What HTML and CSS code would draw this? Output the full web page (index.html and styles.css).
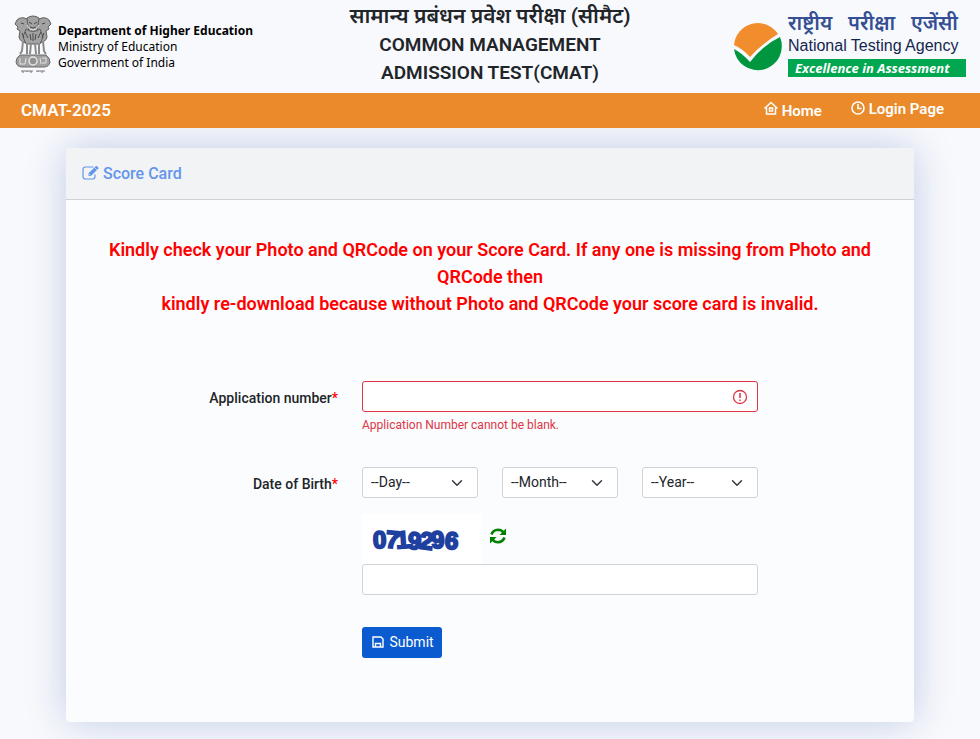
FILE: index.html
```html
<!DOCTYPE html>
<html lang="en">

<head>
    <meta charset="UTF-8" />
    <meta name="viewport" content="width=device-width, initial-scale=1.0" />
    <title>CMAT-2025 Score Card</title>
    <link rel="stylesheet" href="styles.css">
</head>

<body>
    <header class="site-header">
        <div class="ministry">
            <!-- National emblem -->
            <svg class="emblem" viewBox="0 0 38 60" aria-hidden="true">
                <g fill="#a2a2a2" stroke="#5e5e5e" stroke-width="1">
                    <path d="M13 3Q19-1 25 3l1 8q-1 6-7 7-6-1-7-7z" />
                    <path d="M13 4Q7 1 3 5L1 9l3 3-1 2 3 2-1 6q1 5 8 6l2-12z" />
                    <path d="M25 4q6-3 10 1l2 4-3 3 1 2-3 2 1 6q-1 5-8 6l-2-12z" />
                    <path d="M12 14q7 5 14 0l3 8-3 7H12l-3-7z" />
                </g>
                <g stroke="#8a8a8a" stroke-width="2" fill="none">
                    <path d="M9 26L8 36l-2 3M13 28v11M17 28l-1 11M21 28l1 11M25 28v11M29 26l1 10 2 3" />
                </g>
                <path d="M15 7l3 2M23 7l-3 2M16 12q3 2 6 0M7 8l3 1M31 8l-3 1M11 17l3 6M27 17l-3 6M19 18v8M8 18l2 5M30 18l-2 5M16 19l1 6M22 19l-1 6" stroke="#484848" fill="none" />
                <path d="M13 10q2 5 6 5t6-5" stroke="#e4e4e4" fill="none" />
                <path d="M6 40h26q4 3 4 7-1 5-6 5H8q-5 0-6-5 0-4 4-7z" fill="#a0a0a0" stroke="#6c6c6c" />
                <path d="M6 43v6h5M28 43h4v5h-4M12 43l-1 6M26 43l1 6" stroke="#e4e4e4" stroke-width="1" fill="none" />
                <circle cx="19" cy="46" r="4" fill="#929292" stroke="#e4e4e4" stroke-width="1.5" />
                <path d="M7 56h12M22 56h9M9 56v2M13 56v1M17 56v2M24 56v1M28 56v2" stroke="#777" fill="none" />
            </svg>
            <p class="ministry-name">
                <strong>Department of Higher Education</strong><br>
                Ministry of Education<br>
                Government of India
            </p>
        </div>
        <h1 class="exam-title">
            <span lang="hi">सामान्य प्रबंधन प्रवेश परीक्षा (सीमैट)</span><br>
            COMMON MANAGEMENT<br>
            ADMISSION TEST(CMAT)
        </h1>
        <div class="agency">
            <svg class="agency-mark" viewBox="0 0 48 48" aria-hidden="true">
                <path d="M0 22A24 24 0 0 1 44 11Q29 20 16 34 9 26 0 22z" fill="#f28d2d" />
                <path d="M0 26q8 4 16 13Q29 22 46 14A24 24 0 1 1 0 26z" fill="#009640" />
            </svg>
            <div class="agency-text">
                <span class="agency-hindi" lang="hi">
                    <span>राष्ट्रीय</span>
                    <span>परीक्षा</span>
                    <span>एजेंसी</span>
                </span>
                <span class="agency-name">National Testing Agency</span>
                <span class="agency-motto">Excellence in Assessment</span>
            </div>
        </div>
    </header>

    <nav class="navbar">
        <a class="brand" href="#">CMAT-2025</a>
        <div class="nav-links">
            <a class="nav-link nav-home" href="#">
                <svg class="nav-icon" viewBox="0 0 14 14" fill="none" stroke="currentColor" stroke-width="1.5" aria-hidden="true">
                    <path d="M.5 7.5L7 1.500l6.500 6M2.500 6.500v6.500h9V6.500M5.500 7h3v3h-3z" />
                </svg>
                Home
            </a>
            <a class="nav-link" href="#">
                <svg class="nav-icon" viewBox="0 0 14 14" fill="none" stroke="currentColor" stroke-width="1.6" aria-hidden="true">
                    <circle cx="7" cy="7" r="6" />
                    <path d="M7 3v4.500h3.500" />
                </svg>
                Login Page
            </a>
        </div>
    </nav>

    <main class="content">
        <div class="card">
            <h2 class="card-header">
                <svg class="edit-icon" viewBox="0 0 17 16" aria-hidden="true">
                    <path d="M11.500 2H3.500Q1 2 1 4.500v7Q1 14 3.500 14h7q2.500 0 2.500-2.500V9.500" fill="none" stroke="currentColor" stroke-width="1.200" />
                    <path d="M6.500 11V8.300L13.700 1.200q.7-.6 1.400 0l1.100 1.200q.6.700 0 1.300L9 11z" fill="currentColor" />
                    <path d="M12.500 2.500l2.500 2.500M7 9l1.500 1.500" stroke="#f2f3f5" stroke-width=".7" />
                </svg>
                Score Card
            </h2>
            <div class="card-body">
                <p class="notice">
                    Kindly check your Photo and QRCode on your Score Card. If any one is missing from Photo and QRCode then<br>
                    kindly re-download because without Photo and QRCode your score card is invalid.
                </p>
                <form class="score-form">
                    <div class="form-row row-application">
                        <label class="form-label" for="application">Application number<span class="required">*</span></label>
                        <div class="field">
                            <div class="input-wrap">
                                <input class="form-control is-invalid" type="text" id="application" aria-describedby="application-error">
                                <svg class="invalid-icon" viewBox="0 0 16 16" fill="none" stroke="currentColor" aria-hidden="true">
                                    <circle cx="8" cy="8" r="6.500" stroke-width="1.300" />
                                    <path d="M8 4v5M8 10.500v1.500" stroke-width="1.500" />
                                </svg>
                            </div>
                            <div class="error" id="application-error">Application Number cannot be blank.</div>
                        </div>
                    </div>
                    <div class="form-row row-birth">
                        <label class="form-label" for="day">Date of Birth<span class="required">*</span></label>
                        <div class="field date-selects">
                            <select class="form-control form-select" id="day">
                                <option>--Day--</option>
                            </select>
                            <select class="form-control form-select" aria-label="Month">
                                <option>--Month--</option>
                            </select>
                            <select class="form-control form-select" aria-label="Year">
                                <option>--Year--</option>
                            </select>
                        </div>
                    </div>
                    <div class="form-row row-captcha">
                        <div class="field field-offset">
                            <div class="captcha">
                                <div class="captcha-image">
                                    <svg viewBox="0 0 120 50" role="img" aria-label="Captcha">
                                        <g class="captcha-digits">
                                            <text x="11" y="34" transform="rotate(-2 17 26)">0</text>
                                            <text x="24" y="34" transform="rotate(5 31 26)">7</text>
                                            <text x="34" y="34" transform="rotate(-4 41 26)">1</text>
                                            <text x="46" y="35" transform="rotate(5 52 26)">9</text>
                                            <text x="58" y="35" transform="rotate(7 63 26)">2</text>
                                            <text x="69" y="34" transform="rotate(-5 75 26)">9</text>
                                            <text x="83" y="35" transform="rotate(4 90 26)">6</text>
                                        </g>
                                    </svg>
                                </div>
                                <button class="refresh" type="button" aria-label="Refresh captcha">
                                    <svg viewBox="0 0 16 16" fill="none" stroke="currentColor" stroke-width="2.600" aria-hidden="true">
                                        <path d="M1.500 6.500Q3 2 8 1.800q3.500 0 5.500 2.700M14.500 9.500Q13 14 8 14.200q-3.500 0-5.500-2.700" />
                                        <path d="M16 .5v6.500H9.500zM0 15.500V9h6.500z" fill="currentColor" stroke="none" />
                                    </svg>
                                </button>
                            </div>
                            <input class="form-control" type="text" aria-label="Captcha code">
                        </div>
                    </div>
                    <div class="form-row">
                        <div class="field field-offset">
                            <button class="btn-submit" type="button">
                                <svg class="save-icon" viewBox="0 0 12 12" fill="none" stroke="currentColor" stroke-width="1.400" aria-hidden="true">
                                    <path d="M1 1h8l2 2v8H1zM3.500 11V7.500h5V11" />
                                </svg>
                                Submit
                            </button>
                        </div>
                    </div>
                </form>
            </div>
        </div>
    </main>
</body>

</html>
```

FILE: styles.css
```css
* {
    box-sizing: border-box;
}

body {
    margin: 0;
    background: #f8f9fc;
    font-family: Roboto, 'Noto Sans', sans-serif;
    font-size: 14px;
    line-height: 21px;
    color: #212529;
}

a {
    color: inherit;
    text-decoration: none;
}

/* Header */
.site-header {
    display: grid;
    grid-template-columns: 1fr auto 1fr;
    height: 93px;
}

.ministry {
    display: flex;
    align-items: flex-start;
    gap: 6px;
    padding: 15px 0 0 14px;
}

.emblem {
    width: 38px;
    height: 60px;
}

.ministry-name {
    margin: 8px 0 0;
    font-family: 'Noto Sans', sans-serif;
    font-size: 12px;
    line-height: 16px;
    color: #000;
    white-space: nowrap;
}

.exam-title {
    margin: 0;
    padding-top: 3px;
    font-size: 19px;
    font-weight: 600;
    line-height: 28px;
    text-align: center;
}

.exam-title span {
    font-size: 21px;
    line-height: 26px;
}

.agency {
    display: flex;
    justify-content: flex-end;
    gap: 6px;
    padding: 14px 14px 0 0;
}

.agency-mark {
    width: 48px;
    height: 48px;
    margin-top: 9px;
}

.agency-text {
    display: flex;
    flex-direction: column;
    width: 178px;
    white-space: nowrap;
}

.agency-hindi {
    display: flex;
    justify-content: space-between;
    padding-right: 8px;
    font-size: 20px;
    font-weight: 600;
    line-height: 18px;
    color: #344f93;
}

.agency-name {
    font-family: 'Liberation Sans', sans-serif;
    font-size: 16px;
    line-height: 27px;
    color: #14264f;
}

.agency-motto {
    padding-left: 7px;
    background: #00a650;
    font-family: 'Open Sans', sans-serif;
    font-size: 13px;
    font-style: italic;
    font-weight: 700;
    line-height: 18px;
    color: #fff;
}

/* Navigation */
.navbar {
    position: relative;
    z-index: 1;
    display: flex;
    justify-content: space-between;
    height: 35px;
    padding: 0 36px 0 21px;
    background: #eb8a2b;
    font-size: 15px;
    font-weight: 600;
    line-height: 32px;
    color: #fff;
}

.brand {
    font-size: 17px;
    line-height: 35px;
}

.nav-links {
    display: flex;
    gap: 29px;
}

.nav-home {
    line-height: 36px;
}

.nav-icon {
    width: 14px;
    height: 14px;
    vertical-align: -1px;
}

.nav-home .nav-icon {
    vertical-align: 1px;
}

/* Card */
.content {
    padding: 20px 66px 17px;
}

.card {
    border-radius: 4px;
    background: #fbfcfe;
    box-shadow: 0 0 40px #bfcbe6;
}

.card-header {
    margin: 0;
    padding: 12px 16px;
    border-bottom: 1px solid #cfd2d5;
    border-radius: 4px 4px 0 0;
    background: #f2f3f5;
    font-size: 16px;
    font-weight: 500;
    line-height: 27px;
    color: #6495ed;
}

.edit-icon {
    width: 17px;
    height: 16px;
    vertical-align: -2px;
}

.card-body {
    padding: 36px 4px 64px;
}

.notice {
    margin: 0;
    padding: 0 32px;
    font-size: 18px;
    font-weight: 600;
    line-height: 27px;
    text-align: center;
    color: #f00;
}

/* Form */
.score-form {
    margin-top: 64px;
}

.form-row {
    display: grid;
    grid-template-columns: 4fr 6fr 2fr;
}

.row-application {
    min-height: 70px;
    margin-bottom: 16px;
}

.row-birth {
    margin-bottom: 12px;
}

.row-captcha {
    margin-bottom: 32px;
}

.form-label {
    padding: 7px 12px;
    font-weight: 500;
    text-align: right;
}

.required {
    color: #f00;
}

.field {
    min-width: 0;
    padding: 0 12px;
}

.field-offset {
    grid-column: 2;
}

.input-wrap {
    position: relative;
}

.form-control {
    display: block;
    width: 100%;
    height: 31px;
    padding: 4px 8px;
    border: 1px solid #ced4da;
    border-radius: 3px;
    background: #fff;
    font: inherit;
    color: inherit;
}

.is-invalid {
    padding-right: 32px;
    border-color: #dc3545;
}

.invalid-icon {
    position: absolute;
    top: 8px;
    right: 10px;
    width: 16px;
    height: 16px;
    color: #dc3545;
}

.error {
    margin-top: 4px;
    font-size: 12px;
    line-height: 18px;
    color: #dc3545;
}

.date-selects {
    display: grid;
    grid-template-columns: repeat(3, 1fr);
    gap: 24px;
}

.form-select {
    padding: 0 24px 0 8px;
    appearance: none;
    background: #fff url("data:image/svg+xml,%3Csvg xmlns='http://www.w3.org/2000/svg' viewBox='0 0 16 16'%3E%3Cpath fill='none' stroke='%23343a40' stroke-linecap='round' stroke-linejoin='round' stroke-width='2' d='m2 5 6 6 6-6'/%3E%3C/svg%3E") no-repeat right 14px center / 12px 12px;
}

.captcha {
    display: flex;
    align-items: flex-start;
    gap: 8px;
}

.captcha-image {
    width: 120px;
    height: 50px;
    background: #fff;
}

.captcha-digits {
    fill: #2040a0;
    stroke: #2040a0;
    stroke-width: 2px;
    font-family: 'Liberation Sans', sans-serif;
    font-size: 24px;
    font-weight: 700;
}

.refresh {
    width: 16px;
    height: 16px;
    margin-top: 14px;
    padding: 0;
    border: none;
    background: none;
    color: #008000;
    cursor: pointer;
}

.refresh svg {
    display: block;
}

.btn-submit {
    height: 31px;
    padding: 0 8px 0 10px;
    border: none;
    border-radius: 3px;
    background: #0b5bd0;
    font: inherit;
    color: #fff;
    cursor: pointer;
}

.save-icon {
    width: 12px;
    height: 12px;
    margin-right: 2px;
    vertical-align: -1px;
}
```
